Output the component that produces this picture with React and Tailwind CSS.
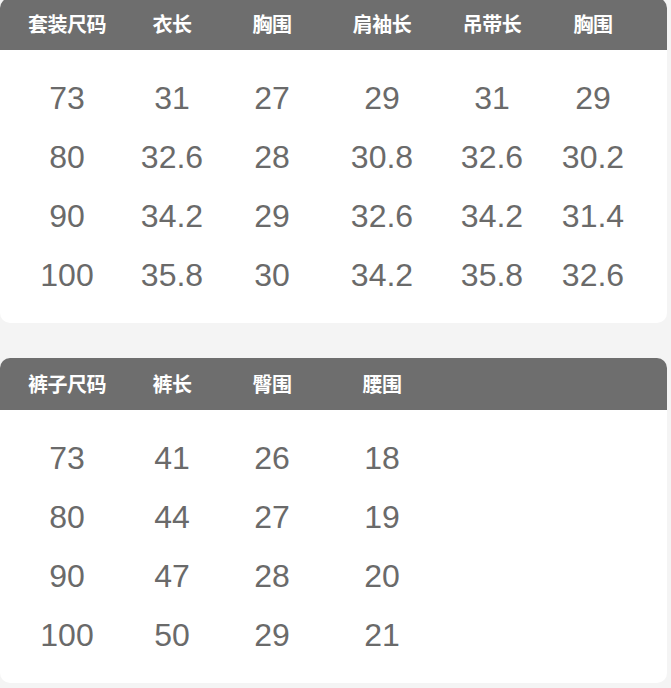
const top = {
  head: ["套装尺码", "衣长", "胸围", "肩袖长", "吊带长", "胸围"],
  rows: [
    ["73", "31", "27", "29", "31", "29"],
    ["80", "32.6", "28", "30.8", "32.6", "30.2"],
    ["90", "34.2", "29", "32.6", "34.2", "31.4"],
    ["100", "35.8", "30", "34.2", "35.8", "32.6"],
  ],
};

const bottom = {
  head: ["裤子尺码", "裤长", "臀围", "腰围", "", ""],
  rows: [
    ["73", "41", "26", "18", "", ""],
    ["80", "44", "27", "19", "", ""],
    ["90", "47", "28", "20", "", ""],
    ["100", "50", "29", "21", "", ""],
  ],
};

const cols = "grid grid-cols-[106px_104px_96px_124px_96px_106px] pl-[14px]";

function SizeCard({ data, className }) {
  return (
    <div className={"w-[667px] bg-white rounded-[10px] overflow-hidden " + className}>
      <div className={cols + " h-[52px] items-center bg-[#6e6e6e]"}>
        {data.head.map((h, i) => (
          <div
            key={i}
            className="text-center text-white text-[20px] font-bold tracking-[-0.5px] font-['Noto_Sans_CJK_SC',sans-serif]"
          >
            {h}
          </div>
        ))}
      </div>
      <div className="pt-[18px] pb-[19px]">
        {data.rows.map((r, ri) => (
          <div key={ri} className={cols + " h-[59px] items-center"}>
            {r.map((c, ci) => (
              <div
                key={ci}
                className="text-center text-[#6a6a6a] text-[32px] font-['Liberation_Sans',Arial,sans-serif]"
              >
                {c}
              </div>
            ))}
          </div>
        ))}
      </div>
    </div>
  );
}

export default function App() {
  return (
    <div className="w-[671px] h-[688px] bg-[#f4f4f4] overflow-hidden">
      <SizeCard data={top} className="-mt-[2px]" />
      <SizeCard data={bottom} className="mt-[35px]" />
    </div>
  );
}
